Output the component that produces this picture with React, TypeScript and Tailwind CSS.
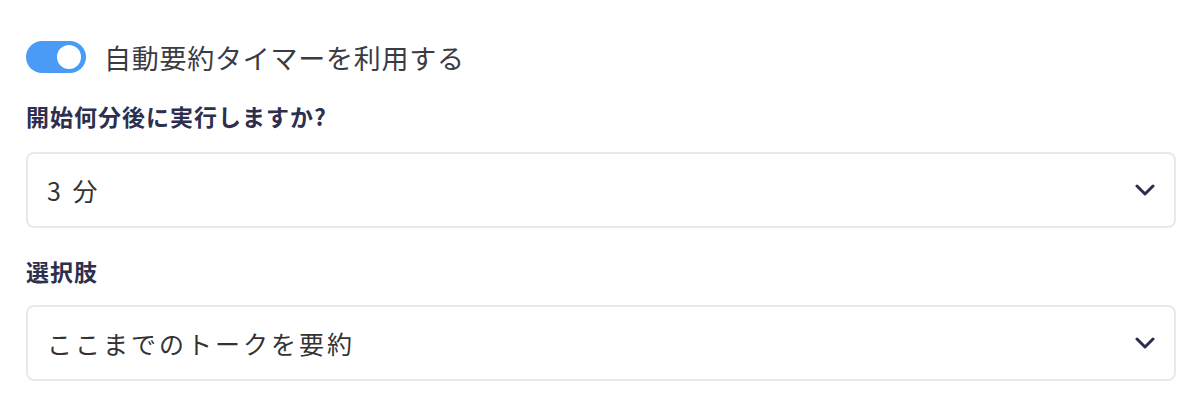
import React, { useState } from "react";

const font = { fontFamily: '"Noto Sans CJK JP", "Noto Sans", sans-serif' };

function Chevron() {
  return (
    <svg width="20" height="12" viewBox="0 0 20 12" fill="none">
      <path d="M2 2l8 8 8-8" stroke="#2b2d4f" strokeWidth="3" strokeLinecap="round" strokeLinejoin="round" />
    </svg>
  );
}

function Select({ value }: { value: string }) {
  return (
    <div className="flex h-[76px] items-center justify-between rounded-[8px] border-2 border-[#e8e8ee] bg-white pl-[19px] pr-[19px]">
      <span className="text-[25px] leading-none tracking-[3px] text-[#333333]">{value}</span>
      <Chevron />
    </div>
  );
}

export default function App() {
  const [on, setOn] = useState(true);
  return (
    <div className="min-h-[420px] w-[1202px] bg-white px-[26px] pt-[41px]" style={font}>
      <div className="flex items-center gap-[18px]">
        <button
          onClick={() => setOn(!on)}
          className="flex h-[32px] w-[60px] items-center rounded-full bg-[#4a9bf6] px-[5px] justify-end"
        >
          <span className="block h-[24px] w-[24px] rounded-full bg-white" />
        </button>
        <span className="text-[27px] leading-none tracking-[0.75px] text-[#3b3b44]">自動要約タイマーを利用する</span>
      </div>
      <div className="mt-[32px] text-[23px] font-bold leading-none tracking-[1px] text-[#2d2f4e]">開始何分後に実行しますか?</div>
      <div className="mt-[24px]">
        <Select value="3 分" />
      </div>
      <div className="mt-[32px] text-[23px] font-bold leading-none tracking-[1px] text-[#2d2f4e]">選択肢</div>
      <div className="mt-[22px]">
        <Select value="ここまでのトークを要約" />
      </div>
    </div>
  );
}
